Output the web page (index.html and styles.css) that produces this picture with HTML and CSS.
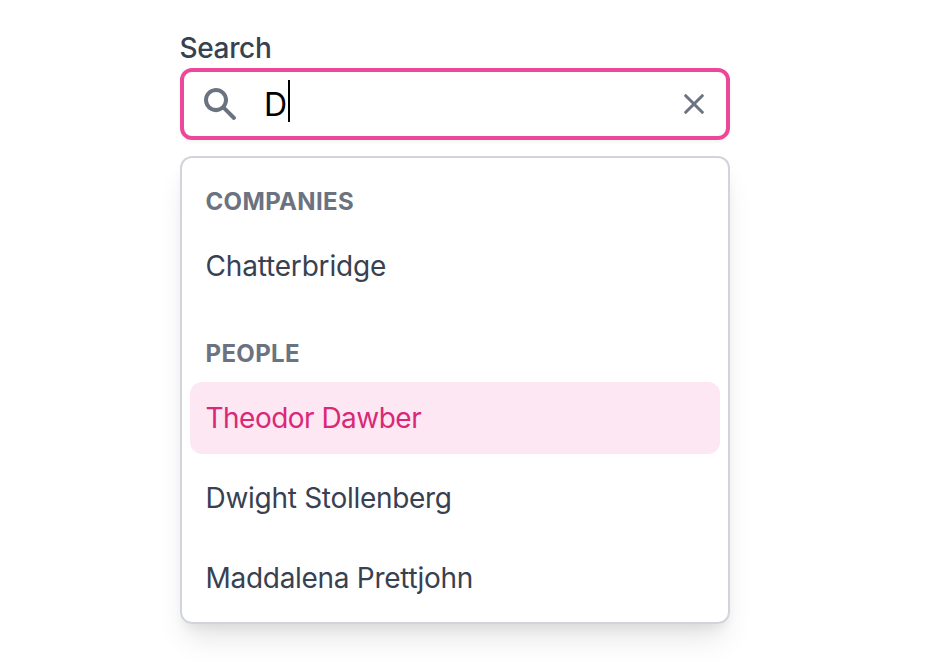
FILE: index.html
```html
<!DOCTYPE html>
<html lang="en">
<head>
<meta charset="utf-8">
<title>Search</title>
<link rel="stylesheet" href="styles.css">
</head>
<body>
<main class="combobox">
  <div class="label">Search</div>
  <div class="field">
    <svg class="icon-search" viewBox="0 0 40 40"><path fill="currentColor" fill-rule="evenodd" d="M16 8a8 8 0 100 16 8 8 0 000-16zM4 16a12 12 0 1121.800 6.940l9.620 9.640a2 2 0 01-2.820 2.820l-9.640-9.600A12 12 0 014 16z"/></svg>
    <span class="query">D</span><span class="caret"></span>
    <svg class="icon-clear" viewBox="0 0 20 20"><path d="M1.700 1.700l16.600 16.600M18.300 1.700l-16.600 16.600" fill="none" stroke="currentColor" stroke-width="3" stroke-linecap="round"/></svg>
  </div>
  <div class="menu">
    <section class="group">
      <h2 class="heading">Companies</h2>
      <div class="option chatterbridge">Chatterbridge</div>
    </section>
    <section class="group">
      <h2 class="heading">People</h2>
      <div class="option active">Theodor Dawber</div>
      <div class="option">Dwight Stollenberg</div>
      <div class="option">Maddalena Prettjohn</div>
    </section>
  </div>
</main>
</body>
</html>
```
FILE: styles.css
```css
* { box-sizing: border-box; }
body { margin: 0; padding-top: 28px; height: 100vh; background: #fff; color: #374151; font-family: Inter, "Liberation Sans", sans-serif; font-size: 28px; line-height: 40px; font-feature-settings: "calt" 0, "liga" 0, "dlig" 0; overflow: hidden; }
.combobox { width: 550px; margin-left: 180px; }
.label { height: 40px; font-weight: 500; letter-spacing: -.35px; text-indent: -.5px; }
.field { display: flex; align-items: center; height: 72px; padding: 0 22px 0 16px; border: 4px solid #ec4899; border-radius: 12px; color: #6b7280; box-shadow: 0 2px 4px rgba(0,0,0,.05); }
.icon-search { width: 40px; height: 40px; margin-right: 24px; }
.query { color: #000; font-size: 32px; margin-top: 2px; }
.caret { width: 2px; height: 42px; margin: -6px 0 0 1px; background: #000; }
.icon-clear { width: 20px; height: 20px; margin-left: auto; }
.menu { height: 468px; margin-top: 16px; padding: 24px 8px 8px; border: 2px solid #d1d5db; border-radius: 12px; box-shadow: 0 20px 30px -6px rgba(0,0,0,.1), 0 8px 12px -4px rgba(0,0,0,.07); }
.heading { margin: 0; padding: 0 16px; height: 40px; font-size: 24px; font-weight: 700; text-transform: uppercase; letter-spacing: .35px; text-indent: -.5px; color: #6b7280; }
.option { height: 72px; padding: 16px; border-radius: 12px; margin-top: 8px; letter-spacing: -.29px; text-indent: -.5px; }
.chatterbridge { letter-spacing: -.18px; }
.group + .group { margin-top: 32px; }
.active { background: #fce7f3; color: #db2777; letter-spacing: -.52px; }
```
